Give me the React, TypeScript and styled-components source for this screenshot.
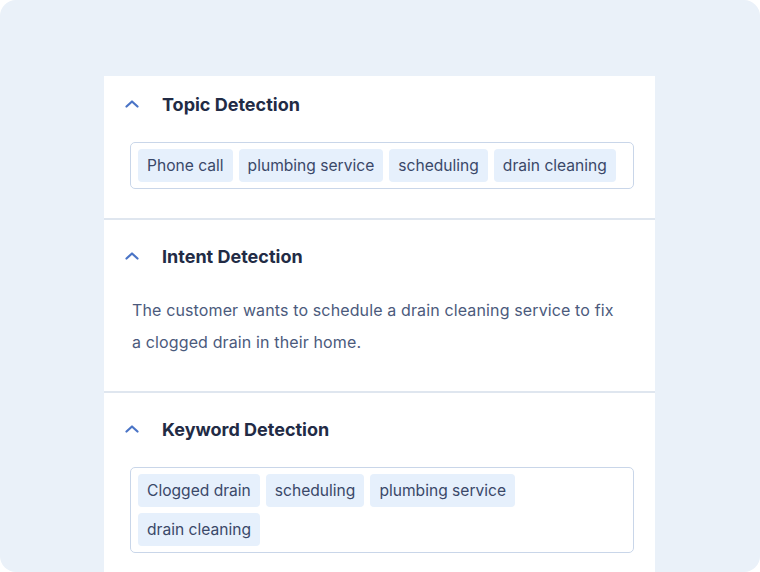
import React from 'react';
import styled, { createGlobalStyle } from 'styled-components';

const GlobalStyle = createGlobalStyle`
  html, body {
    margin: 0;
    padding: 0;
    background: #ffffff;
  }
  body {
    font-family: Inter, "Noto Sans", sans-serif;
  }
`;

type Section = {
  title: string;
  tags?: string[];
  text?: string;
};

const sections: Section[] = [
  {
    title: 'Topic Detection',
    tags: ['Phone call', 'plumbing service', 'scheduling', 'drain cleaning'],
  },
  {
    title: 'Intent Detection',
    text: 'The customer wants to schedule a drain cleaning service to fix a clogged drain in their home.',
  },
  {
    title: 'Keyword Detection',
    tags: ['Clogged drain', 'scheduling', 'plumbing service', 'drain cleaning'],
  },
];

const Chevron = () => (
  <svg width="14" height="8" viewBox="0 0 14 8" fill="none">
    <path d="M1.5 6.5L7 1.5L12.5 6.5" stroke="#4a74c6" strokeWidth="2.2" strokeLinecap="round" strokeLinejoin="round" />
  </svg>
);

const App = () => {
  return (
    <>
      <GlobalStyle />
      <Panel>
        <Card>
          {sections.map((s, i) => (
            <Block key={s.title} first={i === 0} last={i === sections.length - 1}>
              <Header>
                <Toggle>
                  <Chevron />
                </Toggle>
                <Title>{s.title}</Title>
              </Header>
              {s.tags && (
                <TagBox>
                  {s.tags.map((t) => (
                    <Tag key={t}>{t}</Tag>
                  ))}
                </TagBox>
              )}
              {s.text && <Summary>{s.text}</Summary>}
            </Block>
          ))}
        </Card>
      </Panel>
    </>
  );
};

const Panel = styled.div`
  width: 760px;
  height: 572px;
  box-sizing: border-box;
  background: #eaf1f9;
  border-radius: 16px;
  overflow: hidden;
  padding: 76px 105px 0 104px;
`;

const Card = styled.div`
  background: #ffffff;
  height: 100%;
  display: flex;
  flex-direction: column;
`;

const Block = styled.section<{ first?: boolean; last?: boolean }>`
  padding: ${(p) => (p.first ? '16px' : '24px')} 21px ${(p) => (p.last ? '20px' : '29px')} 26px;
  border-bottom: ${(p) => (p.last ? 'none' : '2px solid #dfe6ef')};
`;

const Header = styled.div`
  display: flex;
  align-items: center;
  height: 24px;
  margin-bottom: 26px;
`;

const Toggle = styled.span`
  display: flex;
  align-items: center;
  justify-content: center;
  width: 14px;
  margin-left: -5px;
  margin-right: 23px;
  padding-bottom: 1px;
`;

const Title = styled.h3`
  margin: 0;
  font-size: 18px;
  font-weight: 650;
  color: #222b45;
`;

const TagBox = styled.div`
  display: flex;
  flex-wrap: wrap;
  gap: 6px;
  padding: 6px 6px 6px 7px;
  border: 1.5px solid #c9d6e9;
  border-radius: 5px;
`;

const Tag = styled.span`
  display: inline-flex;
  align-items: center;
  height: 33px;
  padding: 0 9px;
  background: #e6f0fc;
  border-radius: 4px;
  font-size: 15.6px;
  color: #3a4869;
  white-space: nowrap;
`;

const Summary = styled.p`
  margin: 0 0 4px 2px;
  max-width: 490px;
  font-size: 16px;
  line-height: 32px;
  letter-spacing: 0.13px;
  color: #4b5a7c;
`;

export default App;
